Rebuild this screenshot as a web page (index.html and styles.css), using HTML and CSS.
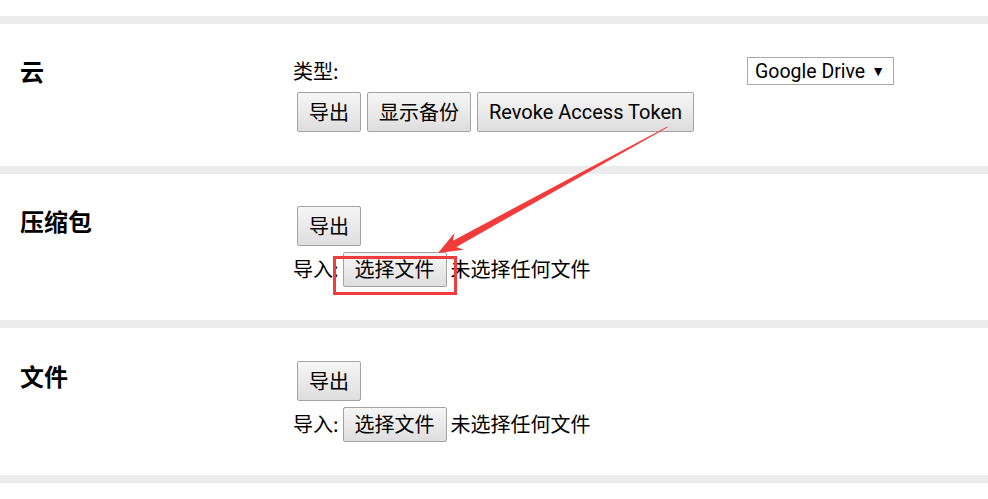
FILE: index.html
```html
<!DOCTYPE html>
<html lang="zh-CN">
<head>
<meta charset="utf-8">
<title>备份</title>
<link rel="stylesheet" href="styles.css">
</head>
<body>
<div class="page">
  <div class="band"></div>
  <section class="sec sec-cloud">
    <h2 class="sec-title">云</h2>
    <div class="sec-body">
      <div class="type-row">
        <span class="label">类型:</span>
        <div class="select"><span>Google Drive</span><span class="caret">▼</span></div>
      </div>
      <div class="btn-row">
        <button class="btn">导出</button>
        <button class="btn">显示备份</button>
        <button class="btn btn-latin">Revoke Access Token</button>
      </div>
    </div>
  </section>
  <div class="band"></div>
  <section class="sec">
    <h2 class="sec-title">压缩包</h2>
    <div class="sec-body">
      <div class="btn-row"><button class="btn">导出</button></div>
      <div class="import-row">
        <span class="label">导入:</span>
        <button class="btn btn-file">选择文件</button>
        <span class="label">未选择任何文件</span>
      </div>
    </div>
  </section>
  <div class="band"></div>
  <section class="sec sec-files">
    <h2 class="sec-title">文件</h2>
    <div class="sec-body">
      <div class="btn-row"><button class="btn">导出</button></div>
      <div class="import-row">
        <span class="label">导入:</span>
        <button class="btn btn-file">选择文件</button>
        <span class="label">未选择任何文件</span>
      </div>
    </div>
  </section>
  <div class="band"></div>

  <div class="highlight"></div>
  <svg class="arrow" width="988" height="499" viewBox="0 0 988 499">
    <g transform="translate(438 253) rotate(151.2)">
      <polygon points="0,0 -24,-9.5 -19,-3.6 -262,-0.4 -262,0.4 -19,3.6 -24,9.5" fill="#f23b3b"/>
    </g>
  </svg>
</div>
</body>
</html>
```

FILE: styles.css
```css
* { box-sizing: border-box; }
html, body { margin: 0; padding: 0; background: #fff; }
body {
  font-family: "Noto Sans CJK SC", "Noto Sans", sans-serif;
  color: #000;
  width: 988px;
  height: 499px;
  overflow: hidden;
}
.page {
  position: relative;
  padding-top: 16px;
}
.band {
  height: 8px;
  background: #ececec;
}
.sec {
  display: grid;
  grid-template-columns: 293px 601px;
  padding: 32px 0 32px 0;
}
.sec-cloud { padding-bottom: 34px; }
.sec-files { padding-top: 33px; }
.sec-title {
  margin: 0;
  padding-left: 20px;
  font-size: 24px;
  line-height: 30px;
  font-weight: 700;
}
.sec-body {
  display: flex;
  flex-direction: column;
  gap: 4px;
}
.sec-cloud .sec-body { gap: 6px; }
.label {
  font-size: 20px;
  line-height: 30px;
}
.type-row {
  display: flex;
  justify-content: space-between;
  align-items: center;
  height: 30px;
}
.select {
  display: flex;
  align-items: center;
  justify-content: space-between;
  width: 147px;
  height: 28px;
  border: 1px solid #a9a9a9;
  background: #fff;
  padding: 0 8px 0 7px;
  font-family: Roboto, "Noto Sans", sans-serif;
  font-size: 19.5px;
}
.caret { font-size: 14px; }
.btn-row {
  display: flex;
  gap: 6px;
  margin-left: 4px;
}
.btn {
  height: 40px;
  margin: 0;
  padding: 0 11px;
  border: 1px solid #a3a3a3;
  border-radius: 2px;
  background: linear-gradient(#f6f6f6, #dedede);
  font-family: "Noto Sans CJK SC", sans-serif;
  font-size: 20px;
  color: #000;
  line-height: 1;
}
.btn-latin {
  font-family: Roboto, "Noto Sans", sans-serif;
  font-size: 20px;
  padding: 0 11px;
}
.import-row {
  display: flex;
  align-items: center;
  height: 38px;
}
.btn-file {
  height: 35px;
  margin: 0 4px 0 4px;
}
.highlight {
  position: absolute;
  left: 333px;
  top: 256px;
  width: 124px;
  height: 39px;
  border: 3px solid #f03c3c;
}
.arrow {
  position: absolute;
  left: 0;
  top: 0;
  pointer-events: none;
}
```
